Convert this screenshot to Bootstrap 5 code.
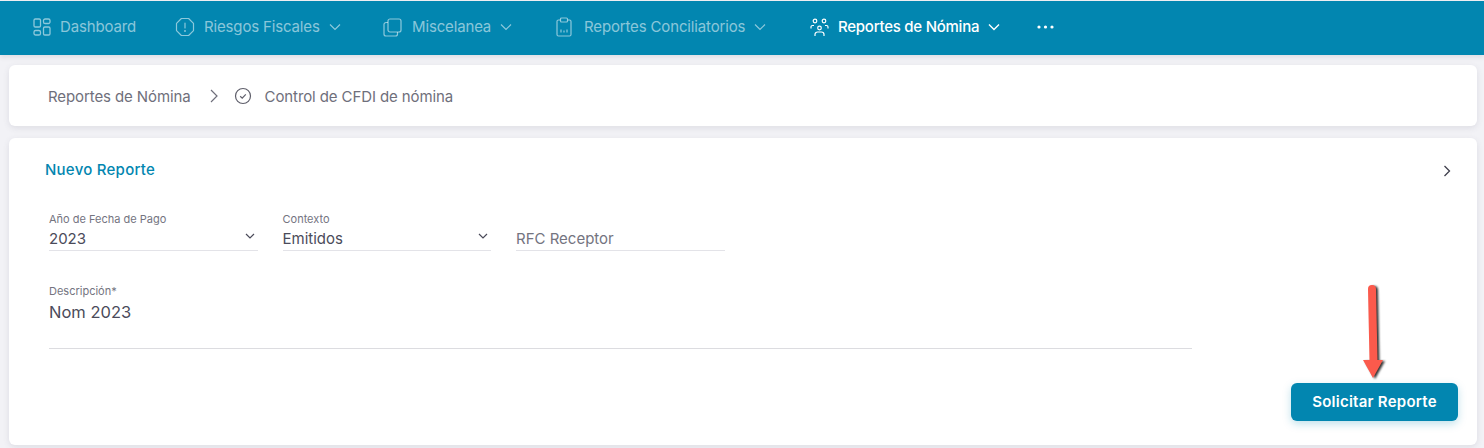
<!DOCTYPE html>
<html lang="es">
<head>
<meta charset="utf-8">
<title>Control de CFDI de nómina</title>
<link rel="stylesheet" href="https://cdn.jsdelivr.net/npm/bootstrap@5.3.0/dist/css/bootstrap.min.css">
<style>
html,body{height:448px;overflow:hidden}
body{background:#f2f2f6;font-family:"Inter","Liberation Sans",sans-serif;color:#4b4b5a;position:relative}
.topbar{background:#0286b0;height:54px;margin-top:1px;padding:0 0 2px 33px;flex-wrap:nowrap;gap:0;box-shadow:0 2px 5px rgba(60,60,90,.12)}
.top-item{display:flex;align-items:center;color:rgba(255,255,255,.55);font-size:15px;letter-spacing:-.15px;white-space:nowrap;text-decoration:none}
.top-item.on{color:#fff;font-weight:500;letter-spacing:-.25px}
.top-item svg{display:block;flex:none}
.ti1{width:142px}.ti2{width:208px}.ti3{width:173px}.ti4{width:254px}.ti5{width:227px}
.t-ic{margin-right:9px}
.ti3 .t-ic{margin-right:10px}
.ti4 .t-ic{margin-right:12px}
.t-ch{margin-left:9px}
.panel{background:#fff;border-radius:6px;box-shadow:0 2px 6px rgba(70,70,100,.12);margin:0 7px 0 9px}
.crumbs{height:61px;margin-top:10px;padding-left:39px;font-size:15px;color:#6f6f7b;letter-spacing:-.1px}
.crumbs span{padding-top:3px}
.crumb-sep{margin:0 15px 0 18px}
.crumb-ok{margin-right:13px}
.formcard{height:307px;margin-top:12px;padding:0 26px 0 36px}
.cardhead{height:62px}
.cardhead span{color:#0286b0;font-size:15px;font-weight:500;letter-spacing:.25px;padding-top:2px}
.cardhead svg{margin-top:4px}
.fields{display:flex;gap:25px;padding-left:4px;margin-top:12px}
.fld{width:208.500px;height:39px;border-bottom:1px solid #e3e3e8;position:relative;display:flex;flex-direction:column;justify-content:flex-end}
.fld label{font-size:11px;color:#74747f;line-height:13px;margin-bottom:1px}
.fld div{font-size:15px;line-height:23px;color:#4b4b5a}
.fld .ph{color:#74747f}
.fld svg{position:absolute;right:3px;top:21px}
.desc{margin:33px 0 0 4px;width:1143px;height:65px;border-bottom:1px solid #dcdce0}
.desc label{display:block;font-size:11px;line-height:13px;color:#74747f;padding-top:1px}
.desc div{font-size:16.500px;line-height:24px;margin-top:2px;color:#4b4b5a}
.btn-solicitar{background:#0286b0;color:#fff;border:0;border-radius:6px;width:167px;height:38px;font-size:15px;font-weight:600;letter-spacing:.25px;padding:0;box-shadow:0 3px 8px rgba(2,134,176,.25);position:absolute;left:1291px;top:383px}
.red-arrow{position:absolute;left:1360px;top:282px;filter:drop-shadow(2px 1px 1px rgba(0,0,0,.8))}
</style>
</head>
<body>
<nav class="navbar topbar d-flex justify-content-start align-items-center">
  <a class="top-item ti1" href="#">
    <svg class="t-ic" width="18" height="18" viewBox="0 0 18 18" fill="none" stroke="currentColor" stroke-width="1.3"><rect x="1" y="1" width="6.500" height="8" rx="1.300"/><rect x="10.500" y="1" width="6.500" height="4.500" rx="1.600"/><rect x="1" y="12.500" width="6.500" height="4.500" rx="1.600"/><rect x="10.500" y="9" width="6.500" height="8" rx="1.300"/></svg>Dashboard</a>
  <a class="top-item ti2" href="#">
    <svg class="t-ic" width="20" height="20" viewBox="0 0 20 20" fill="none" stroke="currentColor" stroke-width="1.2"><path d="M6.400 1.500h7.200l4.900 4.900v7.200l-4.900 4.900H6.400l-4.900-4.900V6.400z" stroke-linejoin="round"/><path d="M10 6v5" stroke-linecap="round"/><circle cx="10" cy="14" r=".4"/></svg>Riesgos Fiscales
    <svg class="t-ch" width="12" height="8" viewBox="0 0 12 8" fill="none" stroke="currentColor" stroke-width="1.2"><path d="M1 1.500l5 5 5-5"/></svg></a>
  <a class="top-item ti3" href="#">
    <svg class="t-ic" width="19" height="19" viewBox="0 0 19 19" fill="none" stroke="currentColor" stroke-width="1.2"><rect x="5" y="1" width="13" height="13" rx="2"/><path d="M5 4.500H3a2 2 0 0 0-2 2V16a2 2 0 0 0 2 2h9.500a2 2 0 0 0 2-2v-2"/></svg>Miscelanea
    <svg class="t-ch" width="12" height="8" viewBox="0 0 12 8" fill="none" stroke="currentColor" stroke-width="1.2"><path d="M1 1.500l5 5 5-5"/></svg></a>
  <a class="top-item ti4" href="#">
    <svg class="t-ic" width="16" height="20" viewBox="0 0 16 20" fill="none" stroke="currentColor" stroke-width="1.2"><path d="M4.500 3H2.500A1.500 1.500 0 0 0 1 4.500v13A1.500 1.500 0 0 0 2.500 19h11a1.500 1.500 0 0 0 1.500-1.500v-13A1.500 1.500 0 0 0 13.500 3h-2"/><rect x="4.500" y="1" width="7" height="4" rx="1"/><path d="M5 15.500v-3M8 15.500v-2M11 15.500v-3"/></svg>Reportes Conciliatorios
    <svg class="t-ch" width="12" height="8" viewBox="0 0 12 8" fill="none" stroke="currentColor" stroke-width="1.2"><path d="M1 1.500l5 5 5-5"/></svg></a>
  <a class="top-item on ti5" href="#">
    <svg class="t-ic" width="19" height="19" viewBox="0 0 19 19" fill="none" stroke="currentColor" stroke-width="1.2"><circle cx="5" cy="3" r="1.800"/><circle cx="14" cy="3" r="1.800"/><circle cx="9.500" cy="10" r="1.800"/><path d="M1 10.500V9a1.500 1.500 0 0 1 1.500-1.500H4M18 10.500V9a1.500 1.500 0 0 0-1.500-1.500H15M5 18v-1.500a2.500 2.500 0 0 1 2.500-2.500h4a2.500 2.500 0 0 1 2.500 2.500V18"/></svg>Reportes de Nómina
    <svg class="t-ch" width="12" height="8" viewBox="0 0 12 8" fill="none" stroke="currentColor" stroke-width="1.4"><path d="M1 1.500l5 5 5-5"/></svg></a>
  <a class="top-item on" href="#">
    <svg width="17" height="4" viewBox="0 0 17 4" fill="#fff"><circle cx="2" cy="2" r="1.600"/><circle cx="8.500" cy="2" r="1.600"/><circle cx="15" cy="2" r="1.600"/></svg></a>
</nav>

<div class="panel crumbs d-flex align-items-center">
  <span>Reportes de Nómina</span>
  <svg class="crumb-sep" width="10" height="14" viewBox="0 0 10 14" fill="none" stroke="#6f6f7b" stroke-width="1.2"><path d="M2 1l6 6-6 6"/></svg>
  <svg class="crumb-ok" width="18" height="18" viewBox="0 0 18 18" fill="none" stroke="#5f5f6b" stroke-width="1.200"><circle cx="9" cy="9" r="7.500"/><path d="M6.200 9.200l2 1.900 3.600-3.800"/></svg>
  <span>Control de CFDI de nómina</span>
</div>

<div class="panel formcard">
  <div class="cardhead d-flex align-items-center justify-content-between">
    <span>Nuevo Reporte</span>
    <svg width="8" height="12" viewBox="0 0 8 12" fill="none" stroke="#3f3f4c" stroke-width="1.300"><path d="M1.500 1l5 5-5 5"/></svg>
  </div>
  <div class="fields">
    <div class="fld"><label>Año de Fecha de Pago</label><div>2023</div>
      <svg width="10" height="7" viewBox="0 0 10 7" fill="none" stroke="#4b4b5a" stroke-width="1.200"><path d="M1 1l4 4 4-4"/></svg></div>
    <div class="fld"><label>Contexto</label><div>Emitidos</div>
      <svg width="10" height="7" viewBox="0 0 10 7" fill="none" stroke="#4b4b5a" stroke-width="1.200"><path d="M1 1l4 4 4-4"/></svg></div>
    <div class="fld"><div class="ph">RFC Receptor</div></div>
  </div>
  <div class="desc"><label>Descripción*</label><div>Nom 2023</div></div>
</div>

<button class="btn btn-solicitar" type="button">Solicitar Reporte</button>

<svg class="red-arrow" width="30" height="100" viewBox="0 0 30 100" aria-hidden="true">
  <path d="M12 7l1.500 72" stroke="#fb5a4c" stroke-width="8" stroke-linecap="round" fill="none"/>
  <path d="M3 78h20l-10 18z" fill="#fb5a4c"/>
</svg>
<script src="https://cdn.jsdelivr.net/npm/bootstrap@5.3.0/dist/js/bootstrap.bundle.min.js"></script>
</body>
</html>
